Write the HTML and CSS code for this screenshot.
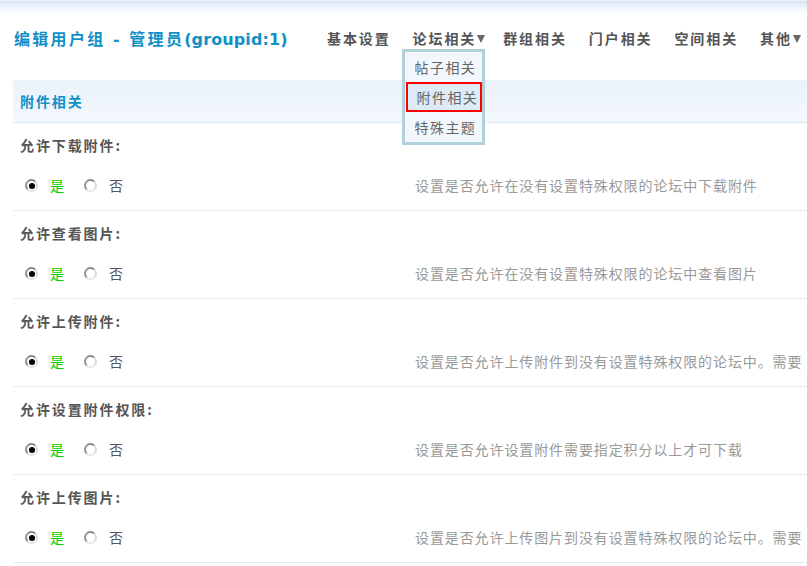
FILE: index.html
```html
<!DOCTYPE html>
<html lang="zh-CN">
<head>
<meta charset="utf-8">
<title>编辑用户组 - 管理员</title>
<link rel="stylesheet" href="styles.css">
</head>
<body>
<div class="topbar"></div>
<div class="header">
  <h1 class="title"><span class="cjk">编辑用户组</span><span class="dash"> - </span><span class="cjk">管理员</span><span class="latin">(groupid:1)</span></h1>
  <nav class="nav">
    <span class="nav-item">基本设置</span>
    <span class="nav-item has-menu">论坛相关<i class="caret"></i>
      <div class="dropdown">
        <div class="dd-item">帖子相关</div>
        <div class="dd-item active">附件相关</div>
        <div class="dd-item">特殊主题</div>
      </div>
    </span>
    <span class="nav-item">群组相关</span>
    <span class="nav-item">门户相关</span>
    <span class="nav-item">空间相关</span>
    <span class="nav-item">其他<i class="caret"></i></span>
  </nav>
</div>

<div class="section">
  <div class="section-head">附件相关</div>

  <div class="row">
    <div class="label">允许下载附件:</div>
    <div class="opts">
      <div class="radios">
        <span class="radio checked"></span><span class="yes">是</span>
        <span class="radio"></span><span class="no">否</span>
      </div>
      <div class="desc">设置是否允许在没有设置特殊权限的论坛中下载附件</div>
    </div>
  </div>

  <div class="row">
    <div class="label">允许查看图片:</div>
    <div class="opts">
      <div class="radios">
        <span class="radio checked"></span><span class="yes">是</span>
        <span class="radio"></span><span class="no">否</span>
      </div>
      <div class="desc">设置是否允许在没有设置特殊权限的论坛中查看图片</div>
    </div>
  </div>

  <div class="row">
    <div class="label">允许上传附件:</div>
    <div class="opts">
      <div class="radios">
        <span class="radio checked"></span><span class="yes">是</span>
        <span class="radio"></span><span class="no">否</span>
      </div>
      <div class="desc">设置是否允许上传附件到没有设置特殊权限的论坛中。需要</div>
    </div>
  </div>

  <div class="row">
    <div class="label">允许设置附件权限:</div>
    <div class="opts">
      <div class="radios">
        <span class="radio checked"></span><span class="yes">是</span>
        <span class="radio"></span><span class="no">否</span>
      </div>
      <div class="desc">设置是否允许设置附件需要指定积分以上才可下载</div>
    </div>
  </div>

  <div class="row">
    <div class="label">允许上传图片:</div>
    <div class="opts">
      <div class="radios">
        <span class="radio checked"></span><span class="yes">是</span>
        <span class="radio"></span><span class="no">否</span>
      </div>
      <div class="desc">设置是否允许上传图片到没有设置特殊权限的论坛中。需要</div>
    </div>
  </div>
</div>
</body>
</html>
```

FILE: styles.css
```css
html, body {
  margin: 0;
  padding: 0;
  background: #fff;
}
body {
  font-family: "DejaVu Sans", "Noto Sans CJK SC", sans-serif;
  font-size: 14px;
  color: #555;
  overflow: hidden;
}
.topbar {
  height: 15px;
  background: linear-gradient(#ffffff 0, #d5e5f2 1px, #dfebf6 3px, #f4f8fc 10px, #ffffff 15px);
}
.header {
  display: flex;
  align-items: center;
  height: 46px;
  padding-left: 14px;
  white-space: nowrap;
}
.title {
  margin: 0;
  width: 313px;
  flex: none;
  font-size: 16px;
  font-weight: bold;
  color: #1190c8;
  font-family: "Noto Sans CJK SC", "DejaVu Sans", sans-serif;
}
.title .cjk {
  letter-spacing: 2.3px;
}
.title .dash {
  font-family: "DejaVu Sans", sans-serif;
  white-space: pre;
  letter-spacing: 2px;
}
.title .latin {
  font-family: "DejaVu Sans", sans-serif;
  letter-spacing: 0.1px;
}
.nav {
  display: flex;
  align-items: center;
  gap: 22px;
}
.nav-item {
  position: relative;
  display: flex;
  align-items: center;
  font-family: "Noto Sans CJK SC", sans-serif;
  font-weight: bold;
  font-size: 14px;
  letter-spacing: 1.9px;
  color: #555;
  line-height: 20px;
}
.nav-item.has-menu {
  margin-right: -4px;
}
.caret {
  display: inline-block;
  width: 0;
  height: 0;
  margin-left: 1px;
  margin-top: 2px;
  border-left: 4px solid transparent;
  border-right: 4px solid transparent;
  border-top: 8px solid #666;
}
.dropdown {
  position: absolute;
  left: -11px;
  top: 21px;
  width: 77px;
  border: 3px solid #b0d0dc;
  background: #f1f7fc;
  letter-spacing: 1.4px;
  font-weight: normal;
  color: #666;
}
.dd-item {
  height: 30px;
  line-height: 30px;
  padding-left: 10px;
  box-sizing: border-box;
}
.dd-item.active {
  margin-left: 1px;
  padding-left: 9px;
  line-height: 26px;
  border: 2px solid #f00;
  background: #dcebf6;
}
.section {
  margin: 19px 0 0 13px;
  font-family: "Noto Sans CJK SC", sans-serif;
}
.section-head {
  height: 42px;
  line-height: 42px;
  padding-left: 7px;
  background: linear-gradient(#eaf2fb, #f3f8fd);
  border-bottom: 1px dotted #d5dde6;
  color: #1190c8;
  font-weight: bold;
  letter-spacing: 1.9px;
}
.row {
  height: 87px;
  border-bottom: 1px dotted #d8dde3;
}
.label {
  padding: 12px 0 0 7px;
  height: 20px;
  line-height: 20px;
  font-weight: bold;
  letter-spacing: 1.9px;
  color: #555;
}
.opts {
  display: grid;
  grid-template-columns: 402px 1fr;
  align-items: center;
  margin-top: 20px;
  height: 20px;
  line-height: 20px;
  white-space: nowrap;
}
.radios {
  display: flex;
  align-items: center;
  padding-left: 12px;
}
.radio {
  width: 13px;
  height: 13px;
  box-sizing: border-box;
  border-radius: 50%;
  border: 2px solid;
  border-color: #8a8a8a #dcdcdc #e6e6e6 #8f8f8f;
  background: #fff;
  position: relative;
  flex: none;
  margin-top: 1px;
}
.radio.checked::after {
  content: "";
  position: absolute;
  left: 1.5px;
  top: 1.5px;
  width: 6px;
  height: 6px;
  border-radius: 50%;
  background: #000;
}
.yes {
  color: #00cc00;
  margin: 0 20px 0 12px;
}
.no {
  color: #555;
  margin-left: 12px;
}
.desc {
  color: #999;
  letter-spacing: 0.9px;
  overflow: hidden;
}
```
